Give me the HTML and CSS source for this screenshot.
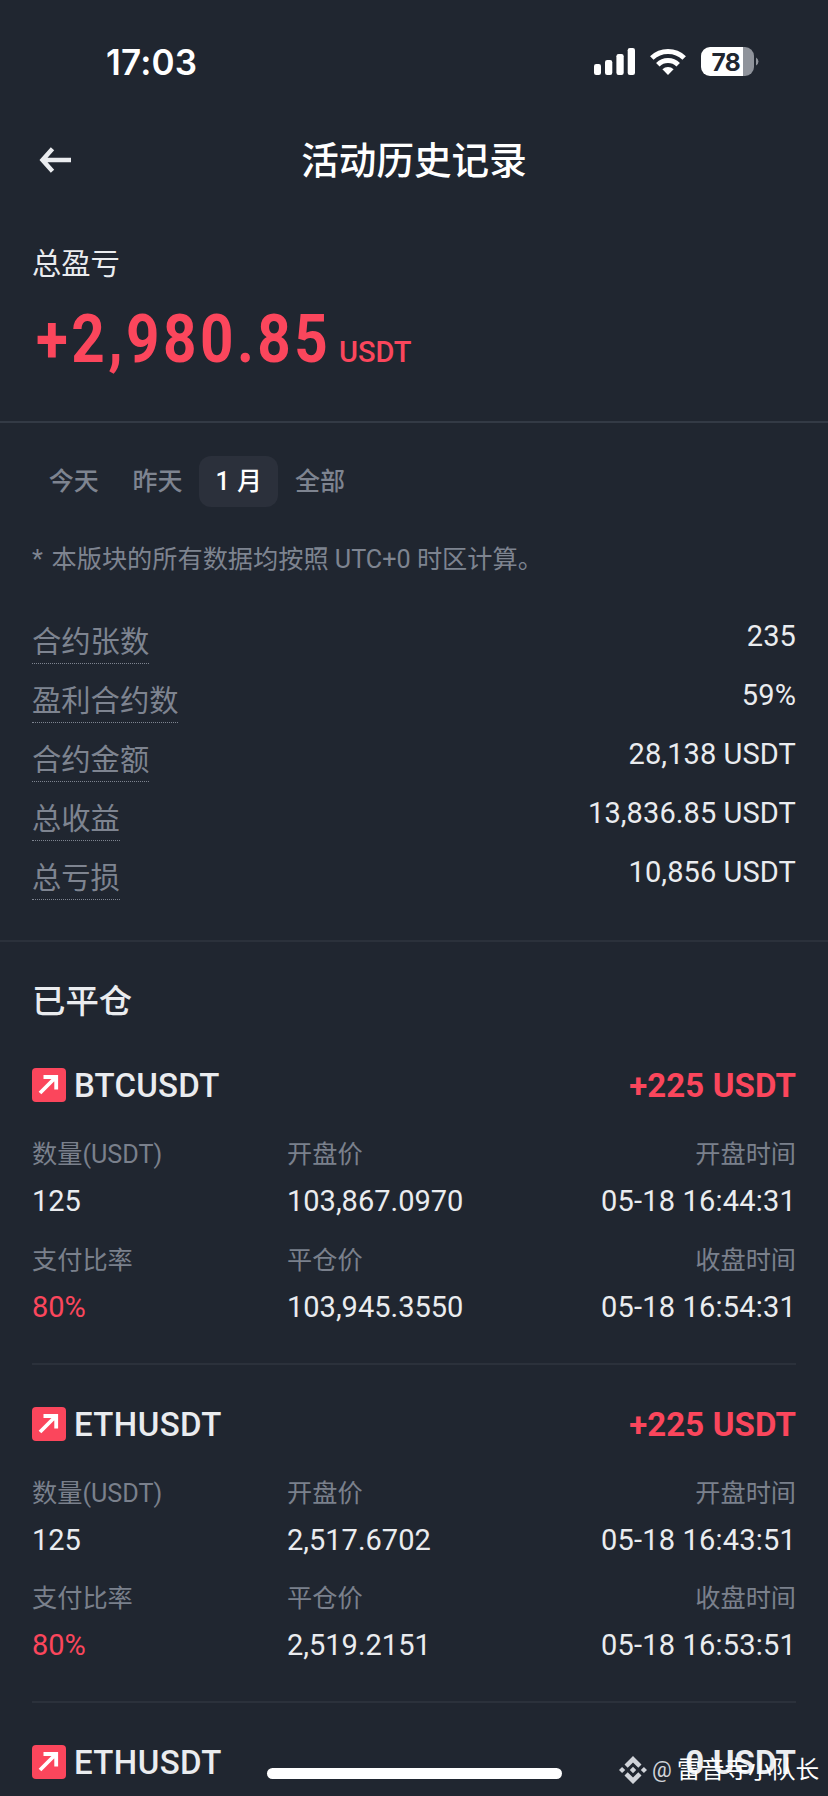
FILE: index.html
```html
<!DOCTYPE html>
<html lang="zh-CN">
<head>
<meta charset="utf-8">
<title>活动历史记录</title>
<link rel="stylesheet" href="styles.css">
</head>
<body>
<div class="screen">
  <div class="status">
    <span class="time">17:03</span>
    <svg class="status-icons" width="168" height="34" viewBox="592 45 168 34">
      <g fill="#fff">
        <rect x="594" y="64" width="7" height="11" rx="2.2"/>
        <rect x="605" y="60" width="7.3" height="15" rx="2.2"/>
        <rect x="616.4" y="54" width="7.3" height="21" rx="2.2"/>
        <rect x="627.7" y="48" width="7.3" height="27" rx="2.2"/>
        <path d="M668 75l-5.6-5.7a8.2 8.2 0 0 1 11.2 0z"/>
      </g>
      <path d="M657.800 64.700a14.800 14.800 0 0 1 20.400 0M651.800 58a23.400 23.400 0 0 1 32.400 0" fill="none" stroke="#fff" stroke-width="5"/>
      <path d="M743 47h2a9 9 0 0 1 9 9v11a9 9 0 0 1-9 9h-2z" fill="#8f939b"/>
      <path d="M743 47h-33a9 9 0 0 0-9 9v11a9 9 0 0 0 9 9h33z" fill="#fff"/>
      <path d="M756 57.500a4.500 4.500 0 0 1 0 8z" fill="#8f939b"/>
      <text x="711.500" y="70.500" class="battery">78</text>
    </svg>
  </div>
  <header class="head">
    <svg class="back" width="32" height="26" viewBox="0 0 32 26" fill="none" stroke="#eaecef" stroke-width="4.500"><path d="M3 13H32M13.500 1.800L3.500 13l10 11.200"/></svg>
    <h1>活动历史记录</h1>
  </header>
  <section class="total">
    <div class="total-label">总盈亏</div>
    <div class="total-row"><span class="total-value">+2,980.85</span><span class="total-unit">USDT</span></div>
  </section>
  <section class="stats">
    <nav class="tabs"><span>今天</span><span>昨天</span><span class="on">1 月</span><span>全部</span></nav>
    <p class="note"><span class="star">*</span>本版块的所有数据均按照 UTC+0 时区计算。</p>
    <div class="stat"><span class="k">合约张数</span><span class="v">235</span></div>
    <div class="stat"><span class="k">盈利合约数</span><span class="v">59%</span></div>
    <div class="stat"><span class="k">合约金额</span><span class="v">28,138 USDT</span></div>
    <div class="stat"><span class="k">总收益</span><span class="v">13,836.85 USDT</span></div>
    <div class="stat"><span class="k">总亏损</span><span class="v">10,856 USDT</span></div>
  </section>
  <section class="closed">
    <h2>已平仓</h2>
    <article class="card">
      <div class="card-head">
        <svg class="up" width="34" height="34" viewBox="0 0 34 34"><rect width="34" height="34" rx="4" fill="#fb465c"/><path d="M8 25L24 9M11.500 9H24.200V21.500" fill="none" stroke="#fff" stroke-width="3.800"/></svg>
        <span class="pair">BTCUSDT</span><span class="pnl">+225 USDT</span>
      </div>
      <div class="grid">
        <span class="l">数量(USDT)</span><span class="l">开盘价</span><span class="l">开盘时间</span>
        <span class="d">125</span><span class="d">103,867.0970</span><span class="d">05-18 16:44:31</span>
        <span class="l">支付比率</span><span class="l">平仓价</span><span class="l">收盘时间</span>
        <span class="d red">80%</span><span class="d">103,945.3550</span><span class="d">05-18 16:54:31</span>
      </div>
    </article>
    <article class="card">
      <div class="card-head">
        <svg class="up" width="34" height="34" viewBox="0 0 34 34"><rect width="34" height="34" rx="4" fill="#fb465c"/><path d="M8 25L24 9M11.500 9H24.200V21.500" fill="none" stroke="#fff" stroke-width="3.800"/></svg>
        <span class="pair wide">ETHUSDT</span><span class="pnl">+225 USDT</span>
      </div>
      <div class="grid">
        <span class="l">数量(USDT)</span><span class="l">开盘价</span><span class="l">开盘时间</span>
        <span class="d">125</span><span class="d">2,517.6702</span><span class="d">05-18 16:43:51</span>
        <span class="l">支付比率</span><span class="l">平仓价</span><span class="l">收盘时间</span>
        <span class="d red">80%</span><span class="d">2,519.2151</span><span class="d">05-18 16:53:51</span>
      </div>
    </article>
    <article class="card">
      <div class="card-head">
        <svg class="up" width="34" height="34" viewBox="0 0 34 34"><rect width="34" height="34" rx="4" fill="#fb465c"/><path d="M8 25L24 9M11.500 9H24.200V21.500" fill="none" stroke="#fff" stroke-width="3.800"/></svg>
        <span class="pair wide">ETHUSDT</span><span class="pnl flat">0 USDT</span>
      </div>
    </article>
  </section>
  <div class="home"></div>
  <div class="mark">
    <svg width="28" height="28" viewBox="0 0 28 28" fill="#d0d3d9"><path d="M14 0l8.500 8.500-3.200 3.200L14 6.400l-5.300 5.300-3.200-3.200zM14 28l-8.500-8.500 3.200-3.200 5.300 5.300 5.300-5.300 3.200 3.200zM3.100 10.900L6.200 14l-3.100 3.100L0 14zM24.900 10.900L28 14l-3.100 3.100-3.100-3.100zM14 10.800l3.200 3.200-3.200 3.200-3.200-3.200z"/></svg>
    <span class="at">@</span><span class="name">雷音寺小队长</span>
  </div>
</div>
</body>
</html>
```
FILE: styles.css
```css
* { box-sizing: border-box; }
body { margin: 0; background: #202630; }
.screen {
  position: relative; width: 828px; height: 1796px; overflow: hidden;
  background: #202630; color: #eaecef;
  font-family: Roboto, "Noto Sans CJK SC", sans-serif;
}
.status { display: flex; justify-content: space-between; align-items: center; height: 124px; padding: 0 68px 0 106px; }
.time { font: 600 35px/40px Inter, sans-serif; color: #fff; letter-spacing: .2px; }
.battery { font: 700 24.500px Inter, sans-serif; fill: #202630; letter-spacing: -.6px; }
.head { display: grid; grid-template-columns: 60px 1fr 60px; align-items: center; height: 72px; padding: 0 39px; }
.head h1 { margin: 0; padding-top: 2px; text-align: center; font-size: 37.600px; line-height: 50px; font-weight: 500; color: #fff; }
.total { height: 227px; padding: 48px 32px 0; border-bottom: 2px solid #333a45; }
.total-label { font-size: 29.300px; line-height: 40px; }
.total-row { display: flex; align-items: baseline; margin-top: 16px; color: #fb465c; }
.total-value { width: 296px; margin-left: 4px; font-size: 66px; line-height: 80px; font-weight: 700; letter-spacing: 3.900px; white-space: nowrap; transform: scaleX(.885); transform-origin: 0 50%; }
.total-unit { margin-left: 7px; font-size: 29px; font-weight: 500; }
.stats { height: 519px; padding: 33px 32px 0; border-bottom: 2px solid #2b313b; }
.tabs { display: flex; height: 51px; line-height: 51px; font-size: 25px; color: #7e8490; font-weight: 500; }
.tabs span { padding: 0 16.800px; }
.tabs .on { width: 79px; padding: 0; text-align: center; border-radius: 12px; background: #2b303b; color: #fff; word-spacing: 1px; }
.note { margin: 35px 0 0; font-size: 25.200px; line-height: 36px; color: #7e8490; white-space: nowrap; }
.star { display: inline-block; width: 19.500px; }
.stat { display: flex; justify-content: space-between; align-items: flex-start; height: 59px; }
.note + .stat { margin-top: 44px; }
.stat .k { height: 42px; padding-top: 1px; font-size: 29.300px; line-height: 38px; color: #7e8490; border-bottom: 1.500px dotted #7e8490; }
.stat .v { font-size: 29px; line-height: 28px; letter-spacing: .1px; }
.closed { padding: 40px 32px 0; }
.closed h2 { margin: 0; font-size: 33.400px; line-height: 40px; font-weight: 500; }
.card { height: 338.500px; padding-top: 42px; border-bottom: 2px solid #2b313b; }
.closed h2 + .card { margin-top: 4px; }
.card-head { display: flex; align-items: center; height: 34px; font-size: 33px; line-height: 34px; font-weight: 500; }
.pair { margin-left: 8px; padding-top: 2px; letter-spacing: .2px; }
.wide { letter-spacing: .4px; }
.pnl { margin-left: auto; padding-top: 2px; font-weight: 700; color: #fb465c; letter-spacing: .1px; }
.flat { color: #eaecef; }
.grid { display: grid; grid-template-columns: 255px 1fr auto; grid-template-rows: 45px 60.500px 45px 50px; margin-top: 35px; }
.grid > :nth-child(3n) { text-align: right; }
.l { font-size: 25.200px; line-height: 36px; color: #7a808c; }
.d { font-size: 29px; line-height: 38px; }
.d:nth-child(3n) { letter-spacing: .2px; }
.red { color: #fb465c; }
.home { position: absolute; left: 267px; top: 1768px; width: 295px; height: 11px; border-radius: 6px; background: #fff; }
.mark { position: absolute; left: 619px; top: 1752px; display: flex; align-items: center; height: 36px; color: #fff; white-space: nowrap; }
.at { margin-left: 5px; width: 25px; font-size: 22px; line-height: 36px; color: #d0d3d9; }
.name { font-size: 23.700px; line-height: 36px; }
```
